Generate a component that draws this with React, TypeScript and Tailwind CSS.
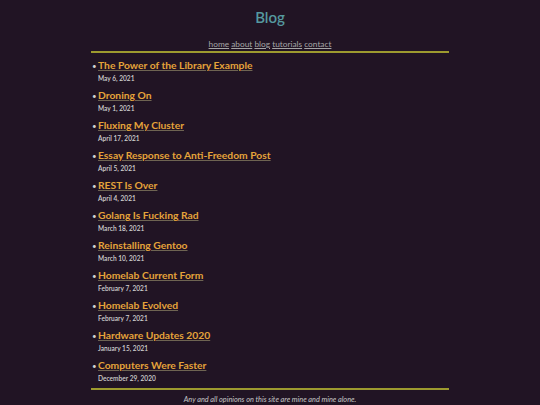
import React from "react";

const posts = [
  ["The Power of the Library Example", "May 6, 2021"],
  ["Droning On", "May 1, 2021"],
  ["Fluxing My Cluster", "April 17, 2021"],
  ["Essay Response to Anti-Freedom Post", "April 5, 2021"],
  ["REST Is Over", "April 4, 2021"],
  ["Golang Is Fucking Rad", "March 18, 2021"],
  ["Reinstalling Gentoo", "March 10, 2021"],
  ["Homelab Current Form", "February 7, 2021"],
  ["Homelab Evolved", "February 7, 2021"],
  ["Hardware Updates 2020", "January 15, 2021"],
  ["Computers Were Faster", "December 29, 2020"],
];

export default function App() {
  return (
    <div className="h-[405px] overflow-hidden w-full bg-[#211424] flex flex-col items-center" style={{ fontFamily: "Lato, 'Open Sans', sans-serif" }}>
      <h1 className="mt-[6px] h-[22px] text-[15px] leading-[22px] font-semibold text-[#55999f]">Blog</h1>
      <nav className="mt-[10px] text-[8.3px] leading-[12px] text-[#a5a5a5]">
        <a className="underline">home</a> <a className="underline">about</a> <a className="underline">blog</a>{" "}
        <a className="underline">tutorials</a> <a className="underline">contact</a>
      </nav>
      <div className="w-[358px] mt-[1px] h-[2px] bg-[#9d9a2f]" />
      <ul className="w-[358px] pt-[4px] pb-[1px]">
        {posts.map(([t, d]) => (
          <li key={t} className="h-[30px] flex">
            <span className="w-[7px] pl-[1px] pt-[5px] text-[#cfcfcf] text-[8px] leading-[8px]">•</span>
            <div className="flex flex-col">
              <a className="text-[10.3px] leading-[16px] font-bold text-[#e5a33a] underline decoration-[#6e6452]">{t}</a>
              <span className="text-[6.6px] leading-[10px] font-semibold text-[#d0d0d0]">{d}</span>
            </div>
          </li>
        ))}
      </ul>
      <div className="w-[358px] h-[2px] bg-[#9d9a2f]" />
      <p className="mt-[5px] text-[7.3px] leading-[10px] italic text-[#c8c8c8]">Any and all opinions on this site are mine and mine alone.</p>
    </div>
  );
}
